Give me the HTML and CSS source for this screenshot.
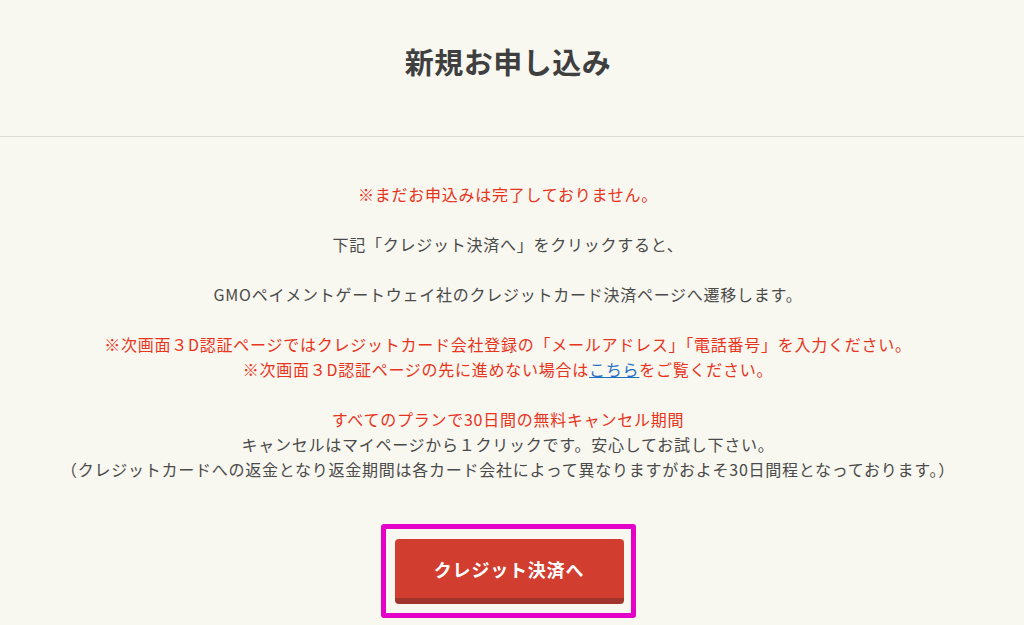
FILE: index.html
```html
<!DOCTYPE html>
<html lang="ja">
<head>
<meta charset="utf-8">
<title>新規お申し込み</title>
<link rel="stylesheet" href="styles.css">
</head>
<body>
<header class="page-header">
  <h1 class="page-title">新規お申し込み</h1>
</header>
<main class="content">
  <p class="note red">※まだお申込みは完了しておりません。</p>
  <p class="note">下記「クレジット決済へ」をクリックすると、</p>
  <p class="note">GMOペイメントゲートウェイ社のクレジットカード決済ページへ遷移します。</p>
  <p class="note red">※次画面３D認証ページではクレジットカード会社登録の「メールアドレス」「電話番号」を入力ください。<br>※次画面３D認証ページの先に進めない場合は<a class="link" href="#">こちら</a>をご覧ください。</p>
  <p class="note"><span class="red">すべてのプランで30日間の無料キャンセル期間</span><br>キャンセルはマイページから１クリックです。安心してお試し下さい。<br>（クレジットカードへの返金となり返金期間は各カード会社によって異なりますがおよそ30日間程となっております。）</p>
  <div class="action">
    <div class="highlight">
      <button class="pay-button" type="button">クレジット決済へ</button>
    </div>
  </div>
</main>
</body>
</html>
```

FILE: styles.css
```css
html, body {
  margin: 0;
  padding: 0;
}

body {
  background: #f8f7f0;
  font-family: "Noto Sans CJK JP", "Noto Sans", sans-serif;
  color: #4a4a4a;
}

.page-header {
  height: 136px;
  border-bottom: 1px solid #dcdbd6;
  display: flex;
  justify-content: center;
  padding-right: 8px;
}

.page-title {
  margin: 41px 0 0;
  font-size: 29px;
  line-height: 40px;
  font-weight: 700;
  letter-spacing: 0.5px;
  color: #3f3f3f;
  height: 40px;
}

.content {
  padding: 45px 8px 0 0;
  text-align: center;
}

.note {
  margin: 0 0 25px;
  font-size: 16px;
  line-height: 25px;
  letter-spacing: 0.75px;
}

.red {
  color: #e8341c;
}

.link {
  color: #1f6fc3;
  text-decoration: underline;
}

.action {
  display: flex;
  justify-content: center;
  padding-top: 17px;
}

.highlight {
  border: 5px solid #e402c8;
  border-radius: 3px;
  padding: 10px 7px 9px 9px;
}

.pay-button {
  display: block;
  width: 229px;
  height: 65px;
  border: none;
  border-bottom: 6px solid #a2352b;
  border-radius: 4px;
  background: #d13e2f;
  color: #ffffff;
  font-family: "Noto Sans CJK JP", "Noto Sans", sans-serif;
  font-size: 18px;
  font-weight: 700;
  letter-spacing: 0.8px;
  padding: 0;
  cursor: pointer;
}
```
